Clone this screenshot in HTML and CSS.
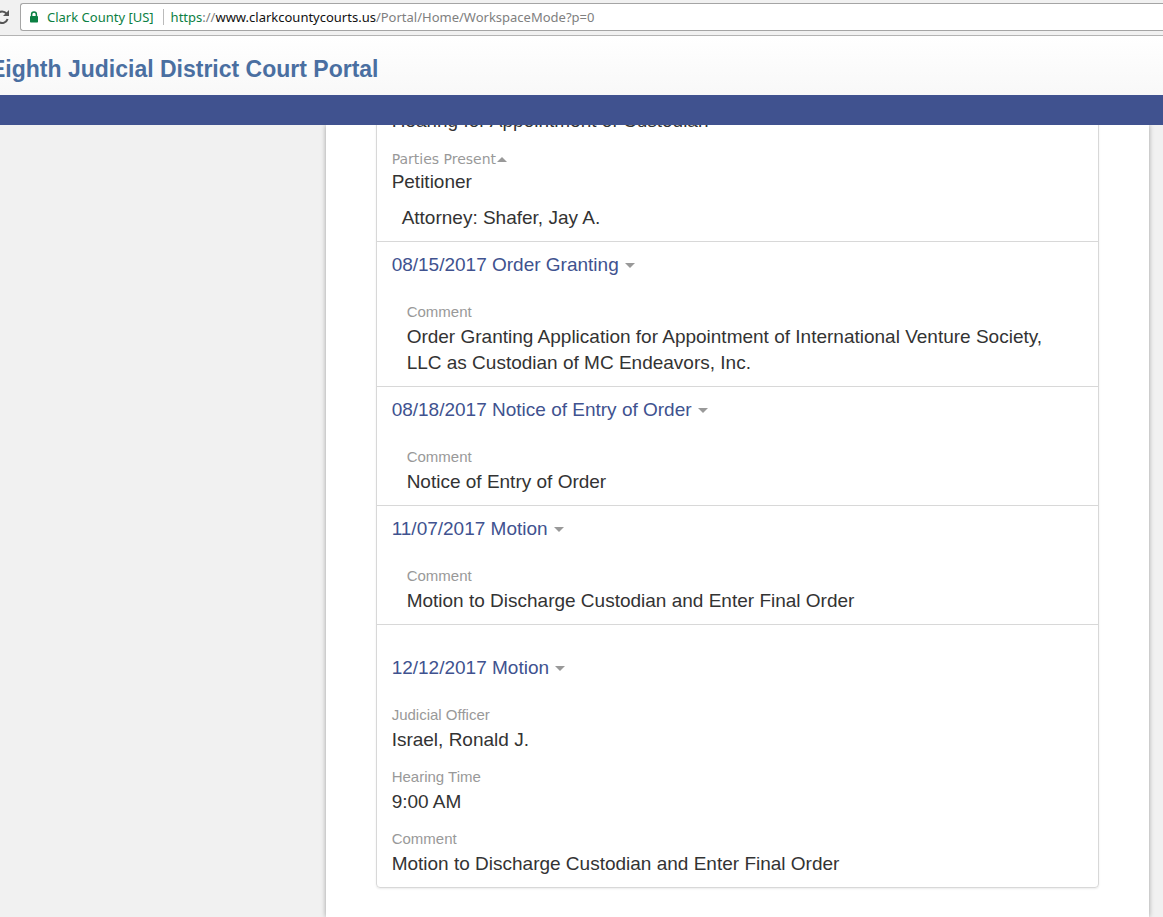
FILE: index.html
```html
<!DOCTYPE html>
<html lang="en">
<head>
<meta charset="utf-8">
<title>Eighth Judicial District Court Portal</title>
<link rel="stylesheet" href="styles.css">
</head>
<body>
<div class="toolbar">
  <button class="reload" type="button" aria-label="Reload">
    <svg width="16" height="16" viewBox="0 0 16 16" aria-hidden="true">
      <path d="M12.6 4.6A5.8 5.8 0 1 0 13.6 10" fill="none" stroke="#555" stroke-width="2"/>
      <path d="M15 1v6H9z" fill="#555"/>
    </svg>
  </button>
  <div class="address">
    <svg class="lock" width="10" height="12" viewBox="0 0 10 12" aria-hidden="true">
      <path d="M2.6 5.5V3.4a2.4 2.4 0 0 1 4.8 0v2.1" fill="none" stroke="#0b8043" stroke-width="1.5"/>
      <rect x="1" y="5" width="8" height="6.5" rx=".8" fill="#0b8043"/>
    </svg>
    <span class="site">Clark County [US]</span>
    <div class="url" role="textbox" aria-label="Address" contenteditable="true" spellcheck="false"><span class="scheme">https</span>://<span class="host">www.clarkcountycourts.us</span>/Portal/Home/WorkspaceMode?p=0</div>
  </div>
</div>
<header class="header"><h1 class="title">Eighth Judicial District Court Portal</h1></header>
<nav class="nav" aria-label="Main"></nav>
<main class="main">
  <div class="sheet">
    <div class="card">
      <section class="event">
        <p class="value">Hearing for Appointment of Custodian</p>
        <button class="parties" type="button">Parties Present<span class="caret caret-up"></span></button>
        <p class="value">Petitioner</p>
        <p class="value attorney">Attorney: Shafer, Jay A.</p>
      </section>
      <section class="event">
        <h2 class="heading"><button class="toggle" type="button">08/15/2017 Order Granting<span class="caret"></span></button></h2>
        <dl class="details indented">
          <div><dt class="label">Comment</dt><dd class="value">Order Granting Application for Appointment of International Venture Society, LLC as Custodian of MC Endeavors, Inc.</dd></div>
        </dl>
      </section>
      <section class="event">
        <h2 class="heading"><button class="toggle" type="button">08/18/2017 Notice of Entry of Order<span class="caret"></span></button></h2>
        <dl class="details indented">
          <div><dt class="label">Comment</dt><dd class="value">Notice of Entry of Order</dd></div>
        </dl>
      </section>
      <section class="event">
        <h2 class="heading"><button class="toggle" type="button">11/07/2017 Motion<span class="caret"></span></button></h2>
        <dl class="details indented">
          <div><dt class="label">Comment</dt><dd class="value">Motion to Discharge Custodian and Enter Final Order</dd></div>
        </dl>
      </section>
      <section class="event hearing">
        <h2 class="heading"><button class="toggle" type="button">12/12/2017 Motion<span class="caret"></span></button></h2>
        <dl class="details">
          <div><dt class="label">Judicial Officer</dt><dd class="value">Israel, Ronald J.</dd></div>
          <div><dt class="label">Hearing Time</dt><dd class="value">9:00 AM</dd></div>
          <div><dt class="label">Comment</dt><dd class="value">Motion to Discharge Custodian and Enter Final Order</dd></div>
        </dl>
      </section>
    </div>
  </div>
</main>
</body>
</html>
```
FILE: styles.css
```css
* { box-sizing: border-box; }
body {
  margin: 0;
  min-height: 100vh;
  display: flex;
  flex-direction: column;
  background: #f1f1f1;
  color: #333;
  font-family: "Liberation Sans", Arial, sans-serif;
}
h1, h2, p, dl, dd { margin: 0; }
button { border: 0; padding: 0; background: none; font: inherit; color: inherit; cursor: pointer; }

.toolbar {
  display: flex;
  align-items: center;
  gap: 10px;
  height: 36px;
  padding-bottom: 2px;
  background: #f1f1f1;
  border-bottom: 1px solid #b4b4b4;
  overflow: hidden;
}
.reload { display: flex; margin-left: -6px; }
.address {
  flex: 1;
  display: flex;
  align-items: center;
  height: 28px;
  padding-left: 8px;
  background: #fff;
  border: 1px solid #a5a5a5;
  border-right: 0;
  border-radius: 3px 0 0 3px;
  font-family: "Noto Sans", sans-serif;
  font-size: 13px;
  white-space: nowrap;
}
.lock { margin-right: 8px; }
.site { color: #0b8043; padding-right: 9px; border-right: 1px solid #bbb; line-height: 16px; }
.url { flex: 1; padding-left: 7px; color: #808080; outline: 0; }
.scheme { color: #0b8043; }
.host { color: #111; }

.header {
  height: 59px;
  display: flex;
  align-items: center;
  padding-top: 6px;
  background: linear-gradient(#fff, #f8f8f8);
  overflow: hidden;
}
.title { margin-left: -10px; color: #4a6fa1; font-size: 23px; line-height: 28px; }
.nav { height: 30px; background: #40528f; }

.main {
  flex: 1;
  display: grid;
  grid-template-columns: 28% 1fr 14px;
  overflow: hidden;
}
.sheet {
  grid-column: 2;
  padding: 0 50px 29px;
  background: #fff;
  box-shadow: 0 0 5px rgba(0, 0, 0, .35);
}
.card {
  margin-top: -28px;
  border: 1px solid #d8d8d8;
  border-radius: 4px;
  box-shadow: 0 1px 2px rgba(0, 0, 0, .08);
}
.event { padding: 10px 15px; }
.event + .event { border-top: 1px solid #d8d8d8; }
.event.hearing { padding-top: 30px; }
.value { font-size: 19px; line-height: 26px; }
.parties {
  display: flex;
  align-items: center;
  gap: 1px;
  margin-top: 15px;
  color: #999;
  font-family: "DejaVu Sans", sans-serif;
  font-size: 14px;
  line-height: 20px;
}
.attorney { margin-top: 10px; padding-left: 10px; }
.heading { font-size: 19px; font-weight: 400; line-height: 26px; color: #40528f; }
.toggle { display: flex; align-items: center; gap: 6px; line-height: 26px; }
.caret {
  border: 5px solid transparent;
  border-top-color: #999;
  border-bottom: 0;
}
.caret-up { border-top: 0; border-bottom: 5px solid #999; }
.details { display: grid; gap: 12px; margin-top: 22px; }
.indented { padding: 0 35px 0 15px; }
.label { color: #999; font-size: 15px; line-height: 24px; }
```
